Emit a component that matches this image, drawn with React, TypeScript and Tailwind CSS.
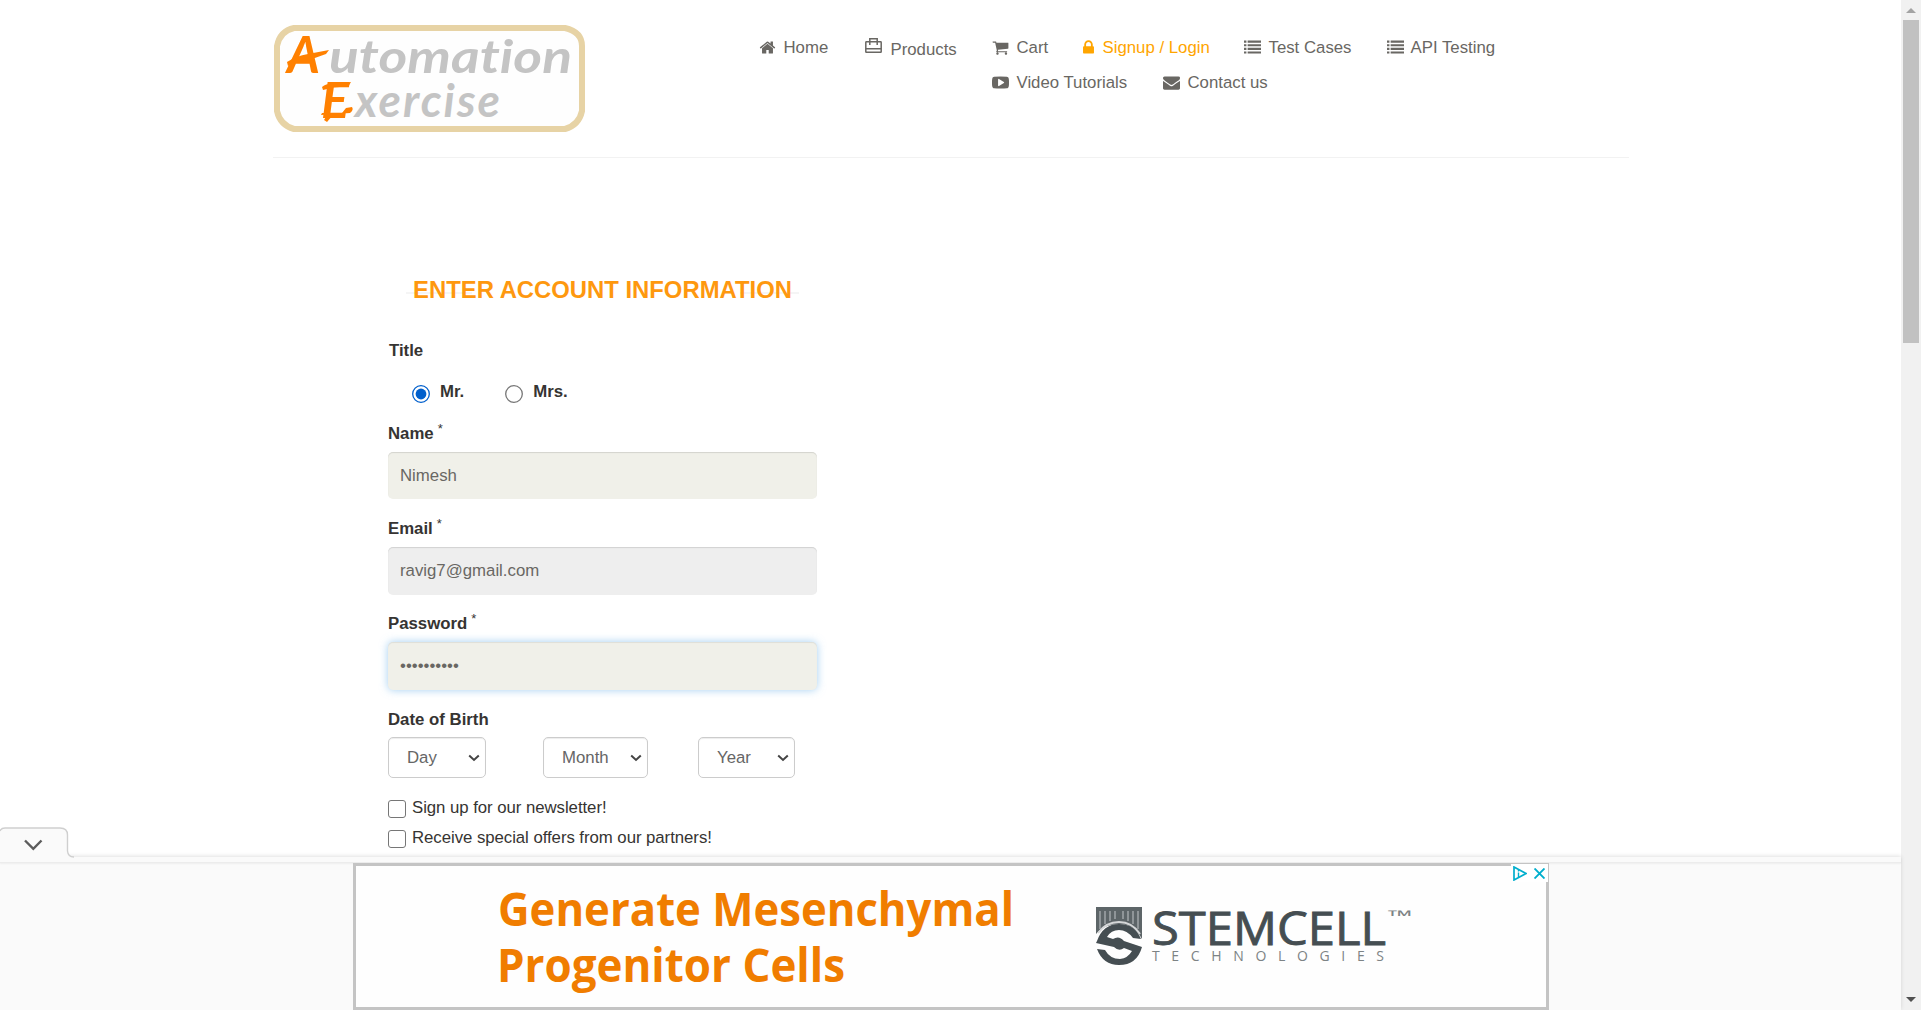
import type { ReactNode } from "react";

const glyphs = {
  home: "M1472 992v480q0 26-19 45t-45 19h-384v-384h-256v384h-384q-26 0-45-19t-19-45v-480q0-1 .5-3t.5-3l575-474 575 474q1 2 1 6zm223-69l-62 74q-8 9-21 11h-3q-13 0-21-7l-692-577-692 577q-12 8-24 7-13-2-21-11l-62-74q-8-10-7-23.5t11-21.5l719-599q32-26 76-26t76 26l244 204v-195q0-14 9-23t23-9h192q14 0 23 9t9 23v408l219 182q10 8 11 21.5t-7 23.5z",
  cart: "M704 1536q0 52-38 90t-90 38-90-38-38-90 38-90 90-38 90 38 38 90zm896 0q0 52-38 90t-90 38-90-38-38-90 38-90 90-38 90 38 38 90zm128-1088v512q0 24-16.5 42.5t-40.5 21.5l-1044 122q13 60 13 70 0 16-24 64h920q26 0 45 19t19 45-19 45-45 19h-1024q-26 0-45-19t-19-45q0-11 8-31.5t16-36 21.5-40 15.5-29.5l-177-823h-204q-26 0-45-19t-19-45 19-45 45-19h256q16 0 28.5 6.5t19.5 15.5 13 24.5 8 26 5.5 29.5 4.5 26h1201q26 0 45 19t19 45z",
  lock: "M640 768h512v-192q0-106-75-181t-181-75-181 75-75 181v192zm832 96v576q0 40-28 68t-68 28h-960q-40 0-68-28t-28-68v-576q0-40 28-68t68-28h32v-192q0-184 132-316t316-132 316 132 132 316v192h32q40 0 68 28t28 68z",
  list: "M0 1312h256v224h-256zM0 928h256v224h-256zM0 544h256v224h-256zM0 160h256v224h-256zM384 1312h1408v224h-1408zM384 928h1408v224h-1408zM384 544h1408v224h-1408zM384 160h1408v224h-1408z",
  mail: "M1792 710v794q0 66-47 113t-113 47h-1472q-66 0-113-47t-47-113v-794q44 49 101 87 362 246 497 345 57 42 92.5 65.5t94.5 48 110 24.5h2q51 0 110-24.5t94.5-48 92.5-65.5q170-123 498-345 57-39 100-87zm0-294q0 79-49 151t-122 123q-376 261-468 325-10 7-42.5 31t-54 38.5-52 32.5-57.5 27-50 9h-2q-23 0-50-9t-57.5-27-52-32.5-54-38.5-42.5-31q-91-64-262-182.5t-205-142.5q-62-42-117-115.5t-55-136.5q0-78 41.5-130t118.5-52h1472q65 0 112.5 47t47.5 113z",
  video:
    "M1280 896q0-37-30-54l-512-320q-31-20-65-2-33 18-33 56v640q0 38 33 56 16 8 31 8 20 0 34-10l512-320q30-17 30-54zm512 0q0 96-1 150t-8.5 136.5-22.5 147.5q-16 73-69 123t-124 58q-222 25-671 25t-671-25q-71-8-124.5-58t-69.5-123q-14-65-21.5-147.5t-8.5-136.5-1-150 1-150 8.5-136.5 22.5-147.5q16-73 69-123t124-58q222-25 671-25t671 25q71 8 124.5 58t69.5 123q14 65 21.5 147.5t8.5 136.5 1 150z",
};

function Glyph({ name, className = "" }: { name: keyof typeof glyphs; className?: string }) {
  return (
    <svg viewBox="0 0 1792 1792" className={`mt-[3px] h-[17px] w-[17px] shrink-0 ${className}`} fill="currentColor">
      <path d={glyphs[name]} />
    </svg>
  );
}

function CaseIcon() {
  return (
    <svg width="17" height="15" viewBox="0 0 17 15" className="ml-px shrink-0" fill="none" stroke="currentColor" strokeWidth="1.5">
      <rect x=".8" y="3.8" width="15.4" height="10.5" rx=".6" />
      <path d="M4.800 7V.8H12.200V7M.8 10.700H16.200" />
    </svg>
  );
}

function NavItem({ icon, label, className }: { icon: ReactNode; label: string; className: string }) {
  return (
    <li className={`flex shrink-0 whitespace-nowrap ${className}`}>
      {icon}
      <a>{label}</a>
    </li>
  );
}

function Logo() {
  return (
    <svg width="311" height="107" viewBox="0 0 311 107" className="shrink-0 overflow-visible">
      <path
        d="M20 3H291Q308 7 308 21V86Q305 100 291 104H20Q6 100 3 86V21Q6 6 20 3Z"
        fill="#fefefe"
        stroke="#e7d3a5"
        strokeWidth="6"
      />
      <g
        fontFamily="Lato, 'Liberation Sans', sans-serif"
        fontStyle="italic"
        fontWeight="700"
        className="[font-variant-ligatures:none]"
      >
        <g fill="#c4c4c4">
          <text x="55" y="48" fontSize="45" textLength="243" lengthAdjust="spacingAndGlyphs">utomation</text>
          <text x="81" y="92" fontSize="46" textLength="145" lengthAdjust="spacing">xercise</text>
        </g>
        <g fill="#ff8000">
          <text x="13" y="48" fontSize="51" textLength="33" lengthAdjust="spacingAndGlyphs">A</text>
          <path d="M13 37Q22 31 34 29L55 25L52 29L38 34Q24 35 14 41Z" />
          <path d="M48 62Q53 58 60 59L77 57L74 62Q62 61 49 65Z" />
          <text x="47" y="93" fontSize="49" textLength="28" lengthAdjust="spacingAndGlyphs">E</text>
          <path d="M47 90L76 88Q80 85 78 82L72 83L68 88L48 88Z" />
          <path d="M53 90L50 95L53 97L59 90Z" />
        </g>
      </g>
    </svg>
  );
}

function Header() {
  return (
    <header className="mx-auto flex h-[158px] w-[1356px] border-b border-[#f2f2f2] pl-px pt-[25px]">
      <Logo />
      <nav className="ml-[174px] flex flex-col gap-[11px] pt-[11px] text-[#696763]">
        <ul className="flex h-6">
          <NavItem className="w-[105px] gap-[8px]" icon={<Glyph name="home" />} label="Home" />
          <NavItem className="w-[128px] gap-[9px] pt-0.5" icon={<CaseIcon />} label="Products" />
          <NavItem className="w-[88px] gap-[8px]" icon={<Glyph name="cart" />} label="Cart" />
          <NavItem
            className="w-[164px] gap-[6px] text-[#ffa500]"
            icon={<Glyph name="lock" />}
            label="Signup / Login"
          />
          <NavItem className="w-[143px] gap-[8px]" icon={<Glyph name="list" />} label="Test Cases" />
          <NavItem className="w-[120px] gap-[7px]" icon={<Glyph name="list" />} label="API Testing" />
        </ul>
        <ul className="ml-[233px] flex h-6">
          <NavItem className="w-[171px] gap-[8px]" icon={<Glyph name="video" />} label="Video Tutorials" />
          <NavItem className="w-[120px] gap-[8px]" icon={<Glyph name="mail" />} label="Contact us" />
        </ul>
      </nav>
    </header>
  );
}

function Radio({ label, checked }: { label: string; checked?: boolean }) {
  return (
    <label className="flex gap-[10px] font-bold">
      <svg width="18" height="18" viewBox="0 0 18 18" className="mt-[5px]">
        <circle cx="9" cy="9" r="8.3" fill="#fff" stroke={checked ? "#005fcc" : "#767676"} strokeWidth="1.3" />
        {checked && <circle cx="9" cy="9" r="5.4" fill="#005fcc" />}
      </svg>
      {label}
    </label>
  );
}

function Field({
  label,
  value,
  type = "text",
  className,
}: {
  label: string;
  value: string;
  type?: string;
  className: string;
}) {
  return (
    <div className="flex h-[95px] flex-col pt-0.5">
      <label className="flex h-[30px] gap-[4px] font-bold">
        {label}
        <span className="-mt-[5px] text-[13px] font-normal">*</span>
      </label>
      <input
        type={type}
        defaultValue={value}
        className={`w-[429px] rounded-[5px] px-3 text-[#696763] outline-none ${className}`}
      />
    </div>
  );
}

function Select({ label, className }: { label: string; className: string }) {
  return (
    <div
      className={`flex h-[41px] items-center justify-between rounded-[5px] border border-[#ccc] pl-[18px] pr-[5px] text-[#666] shadow-[inset_0_1px_1px_rgba(0,0,0,0.075)] ${className}`}
    >
      {label}
      <svg width="12" height="8" viewBox="0 0 12 8" fill="none" stroke="#444" strokeWidth="2">
        <path d="M1.2 1.5L6 6L10.8 1.5" />
      </svg>
    </div>
  );
}

function Checkbox({ label }: { label: string }) {
  return (
    <label className="flex h-[29.5px] gap-[6px] tracking-[-0.05px]">
      <span className="mt-[4px] h-[18px] w-[18px] rounded-[3px] border border-[#767676] bg-white" />
      {label}
    </label>
  );
}

function AccountForm() {
  return (
    <form className="ml-[388px] mt-[116px] flex w-[429px] flex-col">
      <h2 className="relative ml-[18px] flex h-8 w-[393px] justify-center whitespace-nowrap text-[23.85px] font-bold leading-8 text-[#fe980f]">
        <span className="absolute left-0 top-[18px] h-[2px] w-[66px] bg-[#f5f5f5]" />
        <span className="absolute right-0 top-[18px] h-[2px] w-[59px] bg-[#f5f5f5]" />
        <span className="relative">ENTER ACCOUNT INFORMATION</span>
      </h2>
      <div className="mt-[33px] pl-px font-bold">Title</div>
      <div className="mb-[16px] mt-[17px] flex gap-[41px] pl-6">
        <Radio label="Mr." checked />
        <Radio label="Mrs." />
      </div>
      <Field label="Name" value="Nimesh" className="h-[47px] bg-[#f0f0e9] shadow-[inset_0_1px_1px_rgba(0,0,0,0.12)]" />
      <Field
        label="Email"
        value="ravig7@gmail.com"
        className="h-12 bg-[#eee] shadow-[inset_0_1px_1px_rgba(0,0,0,0.12)]"
      />
      <Field
        label="Password"
        type="password"
        value="automation"
        className="h-12 bg-[#f0f0e9] shadow-[inset_0_1px_1px_rgba(0,0,0,0.075),0_0_8px_rgba(102,175,233,0.6)]"
      />
      <div className="mt-[3px] h-[29px] font-bold">Date of Birth</div>
      <div className="flex">
        <Select label="Day" className="mr-[57px] w-[98px]" />
        <Select label="Month" className="mr-[50px] w-[105px]" />
        <Select label="Year" className="w-[97px]" />
      </div>
      <div className="mt-[18px]">
        <Checkbox label="Sign up for our newsletter!" />
        <Checkbox label="Receive special offers from our partners!" />
      </div>
    </form>
  );
}

function StemcellMark() {
  return (
    <svg width="320" height="64" viewBox="0 0 320 64" className="shrink-0 overflow-visible">
      <path d="M0 0H46V32Q38 17 23 17Q8 17 0 27Z" fill="#5d6568" />
      <path d="M4 4V22M9 4V17M14 4V14M19 4V12M27 4V12M32 4V14M37 4V17M42 4V22" stroke="#a0a5a8" strokeWidth="1.5" />
      <path d="M2 26Q10 15 23 15T44 27" fill="none" stroke="#d5d7d8" strokeWidth="2" />
      <path d="M1 34Q7 17 23 17Q39 17 45 32L37 31Q31 23 23 23Q15 23 11 30L17 32Q23 28 28 34L46 40Q41 58 23 58Q7 58 1 42L9 43Q14 52 24 52Q32 51 36 44L28 41Q23 45 18 40L0 36Z" fill="#454e52" />
      <g fontFamily="'Open Sans', 'Noto Sans', sans-serif" fill="#454e52">
        <text x="56" y="38" fontSize="46" fontWeight="500" stroke="#454e52" strokeWidth="0.9" textLength="234" lengthAdjust="spacingAndGlyphs">
          STEMCELL
        </text>
        <text x="56" y="54" fontSize="14" fill="#7d8385" textLength="232" lengthAdjust="spacing">
          TECHNOLOGIES
        </text>
        <text x="292" y="15" fontSize="16" fill="#7d8385" textLength="25" lengthAdjust="spacingAndGlyphs">
          ™
        </text>
      </g>
    </svg>
  );
}

function AdBanner() {
  return (
    <div className="relative z-10 ml-[353px] flex h-[147px] w-[1196px] border-[3px] border-[#c4c4c4] bg-[#fefefe]">
      <svg
        width="520"
        height="141"
        viewBox="0 0 520 141"
        className="ml-[142px] shrink-0 overflow-visible"
        fontFamily="'Open Sans', 'Noto Sans', sans-serif"
        fontWeight="700"
        fill="#f07d00"
      >
        <text x="0" y="60" fontSize="46" textLength="516" lengthAdjust="spacingAndGlyphs">
          Generate Mesenchymal
        </text>
        <text x="-1" y="116" fontSize="46" textLength="348" lengthAdjust="spacingAndGlyphs">
          Progenitor Cells
        </text>
      </svg>
      <div className="ml-[78px] mt-[41px]">
        <StemcellMark />
      </div>
      <div className="absolute -right-0.5 -top-0.5 flex h-[18px] w-[37px] items-center gap-[7px] bg-white pl-0.5">
        <svg width="14" height="15" viewBox="0 0 14 15" fill="none" stroke="#00aecd" strokeWidth="1.7">
          <path d="M1 1V14L13 7.5Z" />
          <path d="M5.5 4V5.5M5.5 6.5V11" strokeWidth="1.4" />
        </svg>
        <svg width="11" height="11" viewBox="0 0 11 11" stroke="#00aecd" strokeWidth="1.9">
          <path d="M.5 .5L10.5 10.5M10.5 .5L.5 10.5" />
        </svg>
      </div>
    </div>
  );
}

function AnchorAd() {
  return (
    <div className="relative h-[153px] shrink-0 bg-[#fafafa] shadow-[0_-1px_4px_rgba(0,0,0,0.12)]">
      <svg width="80" height="36" viewBox="0 0 80 36" className="absolute left-0 -top-[31px]" fill="none">
        <path d="M0 4Q1 2 4 2H60Q67 2 67 9V25Q67 31 73 31V36H0Z" fill="#fafafa" />
        <path d="M0 5Q1 2 5 2H60Q67.500 2 67.500 9V25Q68 31 74 31" stroke="#cfcfcf" strokeWidth="1.4" />
        <path d="M25 14.500L33.300 22.800L41.500 14.500" stroke="#5c5c5c" strokeWidth="2.4" />
      </svg>
      <div className="h-[6px] border-b border-[#ececec] shadow-[0_1px_2px_rgba(0,0,0,0.05)]" />
      <AdBanner />
    </div>
  );
}

function Scrollbar() {
  return (
    <div className="flex w-5 shrink-0 flex-col items-center justify-between bg-[#f1f1f1]">
      <div className="flex flex-col items-center">
        <svg width="10" height="20" viewBox="0 0 10 20" fill="#a3a3a3">
          <path d="M0 13L5 8L10 13Z" />
        </svg>
        <div className="h-[323px] w-4 bg-[#c1c1c1]" />
      </div>
      <svg width="10" height="20" viewBox="0 0 10 20" fill="#505050">
        <path d="M0 7L5 12L10 7Z" />
      </svg>
    </div>
  );
}

export default function App() {
  return (
    <div className="flex h-[1010px] w-[1921px] overflow-hidden bg-white font-['Liberation_Sans',Arial,sans-serif] text-[16.8px] leading-6 text-[#363432]">
      <div className="flex w-[1901px] shrink-0 flex-col">
        <main className="h-[857px] shrink-0 overflow-hidden">
          <Header />
          <AccountForm />
        </main>
        <AnchorAd />
      </div>
      <Scrollbar />
    </div>
  );
}
